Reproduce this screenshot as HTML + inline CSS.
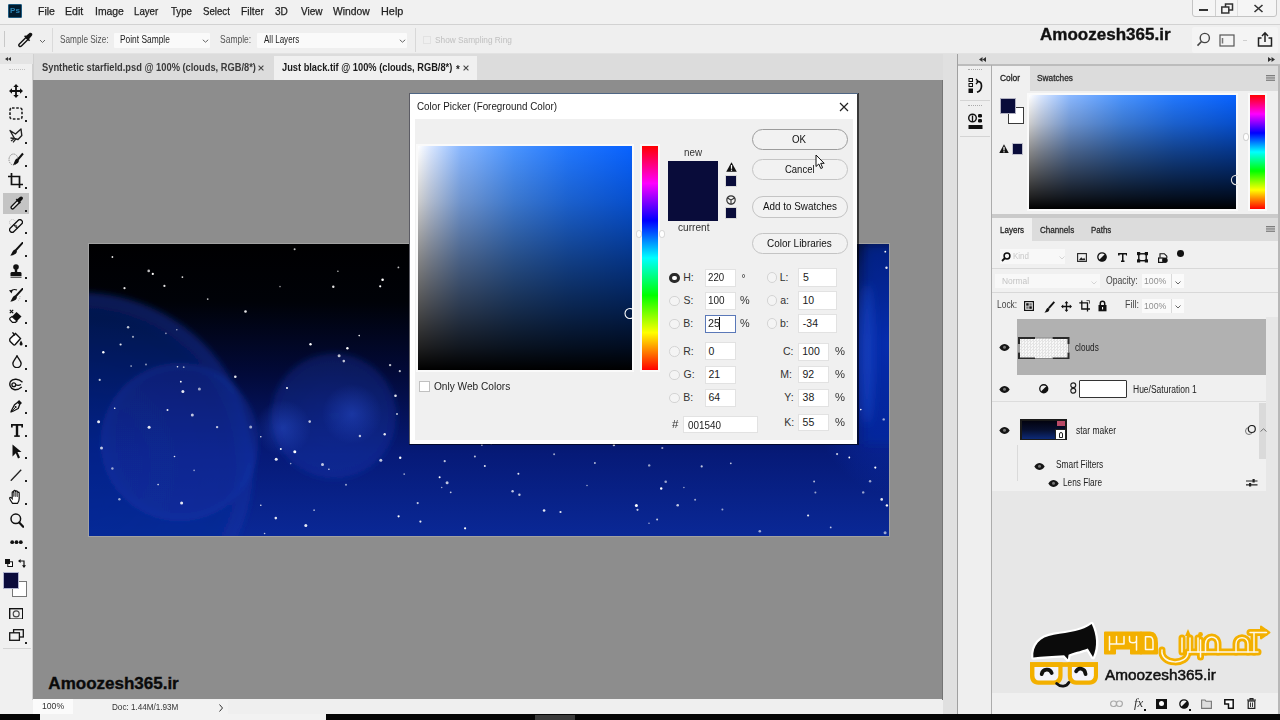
<!DOCTYPE html>
<html><head><meta charset="utf-8">
<style>
*{margin:0;padding:0;box-sizing:border-box}
html,body{width:1280px;height:720px;overflow:hidden;background:#f0f0f0;font-family:"Liberation Sans",sans-serif;color:#222}
.a{position:absolute}
.t{position:absolute;white-space:nowrap;line-height:1}
</style></head><body>
<div class="a" style="left:0;top:0;width:1280px;height:24px;background:#f1f1f1"></div>
<div class="a" style="left:0;top:24px;width:1280px;height:1px;background:#d2d2d2"></div>
<div class="a" style="left:8px;top:4px;width:14px;height:14px;background:#001a2e;border:1px solid #1d5a80;border-radius:1px"></div>
<div class="t" style="left:9.98px;top:7.20px;font-size:8px;color:#2b86b8;font-weight:bold;transform:scaleX(1.009);transform-origin:0 0;">Ps</div>
<div class="t" style="left:37.91px;top:5.95px;font-size:11px;color:#1e1e1e;transform:scaleX(0.958);transform-origin:0 0;-webkit-text-stroke:0.25px #1e1e1e">File</div>
<div class="t" style="left:65.41px;top:5.95px;font-size:11px;color:#1e1e1e;transform:scaleX(0.959);transform-origin:0 0;-webkit-text-stroke:0.25px #1e1e1e">Edit</div>
<div class="t" style="left:94.66px;top:5.95px;font-size:11px;color:#1e1e1e;transform:scaleX(0.945);transform-origin:0 0;-webkit-text-stroke:0.25px #1e1e1e">Image</div>
<div class="t" style="left:133.98px;top:5.95px;font-size:11px;color:#1e1e1e;transform:scaleX(0.879);transform-origin:0 0;-webkit-text-stroke:0.25px #1e1e1e">Layer</div>
<div class="t" style="left:170.51px;top:5.95px;font-size:11px;color:#1e1e1e;transform:scaleX(0.879);transform-origin:0 0;-webkit-text-stroke:0.25px #1e1e1e">Type</div>
<div class="t" style="left:203.27px;top:5.95px;font-size:11px;color:#1e1e1e;transform:scaleX(0.877);transform-origin:0 0;-webkit-text-stroke:0.25px #1e1e1e">Select</div>
<div class="t" style="left:241.18px;top:5.95px;font-size:11px;color:#1e1e1e;transform:scaleX(0.933);transform-origin:0 0;-webkit-text-stroke:0.25px #1e1e1e">Filter</div>
<div class="t" style="left:275.30px;top:5.95px;font-size:11px;color:#1e1e1e;transform:scaleX(0.917);transform-origin:0 0;-webkit-text-stroke:0.25px #1e1e1e">3D</div>
<div class="t" style="left:301.15px;top:5.95px;font-size:11px;color:#1e1e1e;transform:scaleX(0.911);transform-origin:0 0;-webkit-text-stroke:0.25px #1e1e1e">View</div>
<div class="t" style="left:333.45px;top:5.95px;font-size:11px;color:#1e1e1e;transform:scaleX(0.938);transform-origin:0 0;-webkit-text-stroke:0.25px #1e1e1e">Window</div>
<div class="t" style="left:381.03px;top:5.95px;font-size:11px;color:#1e1e1e;transform:scaleX(0.987);transform-origin:0 0;-webkit-text-stroke:0.25px #1e1e1e">Help</div>
<div class="a" style="left:1192px;top:-3px;width:85px;height:20px;border:1px solid #c4c4c4;border-radius:0 0 3px 3px;background:#f5f5f5"></div>
<div class="a" style="left:1215px;top:0;width:1px;height:16px;background:#cfcfcf"></div>
<div class="a" style="left:1237px;top:0;width:1px;height:16px;background:#e0e0e0"></div>
<div class="a" style="left:1199px;top:9px;width:9px;height:2px;background:#333"></div>
<svg class="a" style="left:1220px;top:3px" width="14" height="11" viewBox="0 0 14 11"><rect x="5.5" y="1" width="7" height="6" fill="none" stroke="#333" stroke-width="1.5"/><rect x="1.8" y="4" width="7" height="6" fill="#f5f5f5" stroke="#333" stroke-width="1.5"/></svg>
<svg class="a" style="left:1253px;top:4px" width="11" height="9" viewBox="0 0 11 9"><path d="M1.5 1L9.5 8M9.5 1L1.5 8" stroke="#333" stroke-width="1.6"/></svg>
<div class="a" style="left:0;top:25px;width:1280px;height:29px;background:#efefef"></div>
<div class="a" style="left:0;top:53px;width:1280px;height:1px;background:#e2e2e2"></div>
<div class="a" style="left:4px;top:31px;width:1px;height:16px;background:#c8c8c8"></div>
<svg class="a" style="left:17px;top:32px" width="17" height="16" viewBox="0 0 17 16"><path d="M2.3 14.2C1.6 13.5 1.8 12.6 2.4 12L9 5.4L11 7.4L4.4 14C3.8 14.6 3 14.8 2.3 14.2Z" fill="none" stroke="#111" stroke-width="1.4"/><path d="M8.2 4.6L12.2 1.2C13 0.5 14.1 0.6 14.8 1.3C15.5 2 15.5 3.1 14.8 3.8L11.6 7.8Z" fill="#111"/><path d="M7.6 3.8L12.6 8.8" stroke="#111" stroke-width="1.6"/></svg>
<svg class="a" style="left:39px;top:39px" width="7" height="5" viewBox="0 0 7 5"><path d="M1 1L3.5 3.5L6 1" fill="none" stroke="#666" stroke-width="1"/></svg>
<div class="a" style="left:52px;top:28px;width:1px;height:24px;background:#dadada"></div>
<div class="t" style="left:59.63px;top:34.60px;font-size:10px;color:#555;transform:scaleX(0.825);transform-origin:0 0;">Sample Size:</div>
<div class="a" style="left:113.5px;top:32.5px;width:96.5px;height:15.5px;background:#fafafa;border-radius:1px"></div>
<div class="t" style="left:119.93px;top:34.60px;font-size:10px;color:#222;transform:scaleX(0.838);transform-origin:0 0;">Point Sample</div>
<svg class="a" style="left:202px;top:39px" width="7" height="4" viewBox="0 0 7 4"><path d="M0.8 0.8L3.5 3.2L6.2 0.8" fill="none" stroke="#666" stroke-width="1"/></svg>
<div class="t" style="left:219.62px;top:34.60px;font-size:10px;color:#555;transform:scaleX(0.850);transform-origin:0 0;">Sample:</div>
<div class="a" style="left:256.5px;top:32.5px;width:150.5px;height:15.5px;background:#fafafa;border-radius:1px"></div>
<div class="t" style="left:263.60px;top:34.60px;font-size:10px;color:#222;transform:scaleX(0.804);transform-origin:0 0;">All Layers</div>
<svg class="a" style="left:399px;top:39px" width="7" height="4" viewBox="0 0 7 4"><path d="M0.8 0.8L3.5 3.2L6.2 0.8" fill="none" stroke="#666" stroke-width="1"/></svg>
<div class="a" style="left:415px;top:28px;width:1px;height:24px;background:#d8d8d8"></div>
<div class="a" style="left:423px;top:36px;width:8px;height:8px;border:1px solid #e2e2e2"></div>
<div class="t" style="left:435.13px;top:35.03px;font-size:9.5px;color:#c0c0c0;transform:scaleX(0.872);transform-origin:0 0;">Show Sampling Ring</div>
<div class="t" style="left:1039.57px;top:25.93px;font-size:16.2px;color:#111;font-weight:bold;transform:scaleX(1.052);transform-origin:0 0;-webkit-text-stroke:0.35px #111">Amoozesh365.ir</div>
<div class="a" style="left:1192px;top:27px;width:86px;height:26px;background:#f4f4f4;border-radius:2px"></div>
<svg class="a" style="left:1196px;top:32px" width="15" height="15" viewBox="0 0 15 15"><circle cx="8.8" cy="6" r="4.6" fill="none" stroke="#444" stroke-width="1.4"/><path d="M5.5 9.5L1.5 13.6" stroke="#444" stroke-width="1.6"/></svg>
<svg class="a" style="left:1219px;top:34px" width="16" height="13" viewBox="0 0 16 13"><rect x="1" y="1" width="14" height="11" fill="none" stroke="#555" stroke-width="1.2"/><path d="M3.5 4V9.5" stroke="#777" stroke-width="1.5"/></svg>
<div class="a" style="left:1243px;top:40px;width:4px;height:1px;background:#cfcfcf"></div>
<svg class="a" style="left:1257px;top:31px" width="16" height="16" viewBox="0 0 16 16"><path d="M4.5 7H1.5V15H14.5V7H11.5" fill="none" stroke="#222" stroke-width="1.5"/><path d="M8 11V2M5 5L8 1.8L11 5" fill="none" stroke="#222" stroke-width="1.5"/></svg>
<div class="a" style="left:33px;top:54px;width:910px;height:26px;background:#dcdcdc"></div>
<div class="t" style="left:42.47px;top:63.40px;font-size:10px;color:#3a3a3a;font-weight:bold;transform:scaleX(0.931);transform-origin:0 0;">Synthetic starfield.psd @ 100% (clouds, RGB/8*)</div>
<svg class="a" style="left:257.5px;top:64.5px" width="6" height="6" viewBox="0 0 6 6"><path d="M0.6 0.6L5.4 5.4M5.4 0.6L0.6 5.4" stroke="#444" stroke-width="1.1"/></svg>
<div class="a" style="left:273.5px;top:56px;width:203.5px;height:24px;background:#f0f0f0"></div>
<div class="t" style="left:281.56px;top:63.40px;font-size:10px;color:#1a1a1a;font-weight:bold;transform:scaleX(0.927);transform-origin:0 0;">Just black.tif @ 100% (clouds, RGB/8*)</div>
<div class="t" style="left:455.75px;top:65.00px;font-size:10px;color:#1a1a1a;font-weight:bold;transform:scaleX(0.974);transform-origin:0 0;">*</div>
<svg class="a" style="left:462.5px;top:64.5px" width="6" height="6" viewBox="0 0 6 6"><path d="M0.6 0.6L5.4 5.4M5.4 0.6L0.6 5.4" stroke="#444" stroke-width="1.1"/></svg>
<div class="a" style="left:0;top:54px;width:33px;height:660px;background:#f0f0f0"></div>
<div class="a" style="left:32px;top:54px;width:1.5px;height:646px;background:#d0d0d0"></div>
<div class="a" style="left:0;top:54px;width:33px;height:10px;background:#e4e4e4"></div>
<svg class="a" style="left:5px;top:57px" width="6" height="4" viewBox="0 0 6 4"><path d="M3 0L0 2L3 4ZM6 0L3 2L6 4Z" fill="#333"/></svg>
<div class="a" style="left:9px;top:69px;width:16px;height:1px;border-top:1px dotted #c0c0c0"></div>
<svg class="a" style="left:9px;top:84px" width="14" height="14" viewBox="0 0 14 14"><path d="M7 2V12M2 7H12" stroke="#111" stroke-width="1.8"/><path d="M7 0L4.3 3H9.7ZM7 14L4.3 11H9.7ZM0 7L3 4.3V9.7ZM14 7L11 4.3V9.7Z" fill="#111"/></svg>
<svg class="a" style="left:9px;top:107px" width="14" height="13" viewBox="0 0 14 13"><rect x="1" y="1" width="12" height="11" rx="2" fill="none" stroke="#222" stroke-width="1.6" stroke-dasharray="2.6 1.6"/></svg>
<svg class="a" style="left:9px;top:128px" width="14" height="15" viewBox="0 0 14 15"><path d="M1 2.5L6.5 6L12 1L12.8 7.5L9 11.5L5.5 10.5Z" fill="none" stroke="#222" stroke-width="1.4" stroke-linejoin="round"/><path d="M5.5 10.5L2 13M7 10.8L4 14.3M5.5 10.5L1.5 10" stroke="#222" stroke-width="1.3"/></svg>
<svg class="a" style="left:8px;top:152px" width="16" height="14" viewBox="0 0 16 14"><ellipse cx="5.5" cy="7.5" rx="4.5" ry="5.5" fill="none" stroke="#888" stroke-width="1" stroke-dasharray="1.4 0.9"/><path d="M9.5 8L15 1.5" stroke="#111" stroke-width="2"/><path d="M8.8 6.5C6.5 7.5 6.5 11 5 13C8 12.5 11 11 10.8 8.5Z" fill="#111"/></svg>
<svg class="a" style="left:8px;top:173px" width="15" height="15" viewBox="0 0 15 15"><path d="M3.5 0V11.5H15M0 3.5H11.5V15" fill="none" stroke="#111" stroke-width="1.7"/></svg>
<div class="a" style="left:3px;top:192.5px;width:26.4px;height:21.3px;background:#c4c4c4"></div>
<svg class="a" style="left:9.5px;top:196px" width="13" height="14" viewBox="0 0 13 14"><path d="M1.6 12.6C0.9 11.9 1 10.9 1.7 10.2L7.5 4.4L9.6 6.5L3.8 12.3C3.1 13 2.2 13.2 1.6 12.6Z" fill="#eee" stroke="#111" stroke-width="1.3"/><path d="M7 3.5L9.8 0.9C10.6 0.2 11.7 0.2 12.4 0.9C13.1 1.6 13.1 2.7 12.4 3.5L9.9 6.3Z" fill="#111"/><path d="M6.3 3.2L10.3 7.2" stroke="#111" stroke-width="1.7"/></svg>
<svg class="a" style="left:9px;top:219px" width="14" height="14" viewBox="0 0 14 14"><circle cx="3.5" cy="3.5" r="3" fill="none" stroke="#aaa" stroke-width="0.8" stroke-dasharray="1 1"/><path d="M1.2 9.3L9.3 1.2C10.2 0.3 11.5 0.3 12.4 1.2L12.8 1.6C13.7 2.5 13.7 3.8 12.8 4.7L4.7 12.8C3.8 13.7 2.5 13.7 1.6 12.8L1.2 12.4C0.3 11.5 0.3 10.2 1.2 9.3Z" fill="#f0f0f0" stroke="#111" stroke-width="1.3"/><path d="M4.5 5.5L8.5 9.5" stroke="#111" stroke-width="1"/><rect x="5.6" y="6" width="2.5" height="2.5" transform="rotate(45 6.85 7.25)" fill="#555"/></svg>
<svg class="a" style="left:10px;top:242px" width="13" height="14" viewBox="0 0 13 14"><path d="M12.5 0.8L6 8" stroke="#111" stroke-width="1.9" stroke-linecap="round"/><path d="M5.2 7.4C2.6 7.8 2.3 11 0.2 13.6C3.5 13.5 7 11.8 6.9 9Z" fill="#111"/></svg>
<svg class="a" style="left:10px;top:264px" width="12" height="14" viewBox="0 0 12 14"><circle cx="6" cy="3" r="2.8" fill="#111"/><rect x="4.8" y="5" width="2.4" height="3" fill="#111"/><path d="M0.5 12V9.5C0.5 8.5 1.3 8 2 8H10C10.8 8 11.5 8.5 11.5 9.5V12Z" fill="#111"/><rect x="0.5" y="12.6" width="11" height="1.3" fill="#555"/></svg>
<svg class="a" style="left:9px;top:288px" width="14" height="14" viewBox="0 0 14 14"><path d="M13.5 0.8L7 8" stroke="#111" stroke-width="1.9" stroke-linecap="round"/><path d="M6.2 7.4C3.6 7.8 3.3 11 1.2 13.6C4.5 13.5 8 11.8 7.9 9Z" fill="#111"/><path d="M1.5 3.5Q4 0.5 8 2" fill="none" stroke="#111" stroke-width="1.2"/><path d="M0 2.2L2.5 5.5L3.8 2Z" fill="#111"/><path d="M11 8Q11 12 8.5 13" fill="none" stroke="#999" stroke-width="0.8" stroke-dasharray="1 1"/></svg>
<svg class="a" style="left:9px;top:309px" width="13" height="14" viewBox="0 0 13 14"><path d="M0.8 0.8L4.2 4.2M4.2 0.8L0.8 4.2" stroke="#111" stroke-width="1.2"/><path d="M7.5 3L12.5 7.5L8 12L3 7.5Z" fill="#111"/><path d="M3 7.5L8 12L6.5 13.3H3.5L1.2 11C0.5 10.3 0.5 9.5 1.2 8.9Z" fill="#fff" stroke="#111" stroke-width="1.2"/></svg>
<svg class="a" style="left:9px;top:332px" width="14" height="14" viewBox="0 0 14 14"><path d="M1.2 6.5L6.5 1.5L11.5 6.5L6.3 12.5C5.7 13.1 4.9 13.1 4.3 12.5L1.2 9.4C0.6 8.8 0.6 7.1 1.2 6.5Z" fill="#fff" stroke="#111" stroke-width="1.4"/><path d="M3.5 0.3L6 3.5" stroke="#111" stroke-width="1.3"/><path d="M12 8.5C12.8 10 13.6 11 13.6 12A1.5 1.5 0 0 1 10.6 12C10.6 11 11.3 10 12 8.5Z" fill="#111"/></svg>
<svg class="a" style="left:11.5px;top:355px" width="10" height="13" viewBox="0 0 10 13"><path d="M5 0.8C3.5 4 0.9 6 0.9 8.6A4.1 4.1 0 0 0 9.1 8.6C9.1 6 6.5 4 5 0.8Z" fill="none" stroke="#111" stroke-width="1.4"/></svg>
<svg class="a" style="left:9px;top:378px" width="14" height="13" viewBox="0 0 14 13"><path d="M13.5 4.2C10 0.8 4 0 1.5 3.5C0 6 1 10.5 5 11.5C8 12.2 11 10.5 12.8 9" fill="none" stroke="#111" stroke-width="1.4"/><circle cx="4.8" cy="6.8" r="1.9" fill="none" stroke="#111" stroke-width="1.3"/><path d="M6.6 6.8Q9.5 8 12 6.5" fill="none" stroke="#111" stroke-width="1.1"/></svg>
<svg class="a" style="left:10px;top:400px" width="12" height="13" viewBox="0 0 12 13"><path d="M8.3 0.8L11.2 3.7" stroke="#111" stroke-width="2.2"/><path d="M7.8 2.2L9.8 4.2L8.2 8.5L2.5 11.5L1 12L1.5 10.5L4.5 4.8Z" fill="none" stroke="#111" stroke-width="1.3" stroke-linejoin="round"/><circle cx="5.6" cy="7" r="1" fill="#111"/><path d="M1.3 11.7L5 8" stroke="#111" stroke-width="0.9"/></svg>
<svg class="a" style="left:10.5px;top:423.5px" width="12" height="13" viewBox="0 0 12 13"><path d="M0.8 3.5V0.9H11.2V3.5" fill="none" stroke="#111" stroke-width="1.8"/><path d="M6 0.9V12" stroke="#111" stroke-width="2.4"/><path d="M3.2 12.1H8.8" stroke="#111" stroke-width="1.6"/></svg>
<svg class="a" style="left:12px;top:444px" width="10" height="15" viewBox="0 0 10 15"><path d="M0.5 0.5L9.5 8H5.5L8 13.5L6 14.5L3.8 9.3L0.5 12.5Z" fill="#111"/></svg>
<svg class="a" style="left:10px;top:468.5px" width="12" height="12.5" viewBox="0 0 12 12.5"><path d="M0.8 11.8L11.2 0.8" stroke="#222" stroke-width="1.3"/></svg>
<svg class="a" style="left:9px;top:489px" width="13" height="15" viewBox="0 0 13 15"><path d="M3.2 13.8C2 12.3 0.5 10 0.7 9C0.9 8.1 2.2 8.3 3.2 9.6V3.6C3.2 2.4 4.8 2.4 4.8 3.6V7.5V2.2C4.8 1 6.6 1 6.6 2.2V7.5V2.7C6.6 1.5 8.4 1.5 8.4 2.7V7.8V4C8.4 2.9 10.2 2.9 10.2 4V9.5C10.2 12 9.3 13.3 8.5 14.3H3.6Z" fill="#fff" stroke="#111" stroke-width="1.2"/><path d="M4.8 4V7.5M6.6 3V7.5M8.4 3.5V7.8" stroke="#777" stroke-width="1"/></svg>
<svg class="a" style="left:9.5px;top:512.5px" width="14" height="15" viewBox="0 0 14 15"><circle cx="5.8" cy="5.8" r="4.8" fill="none" stroke="#111" stroke-width="1.5"/><path d="M9.2 9.5L13.2 13.8" stroke="#111" stroke-width="2.2" stroke-linecap="round"/></svg>
<svg class="a" style="left:10px;top:540px" width="13" height="5" viewBox="0 0 13 5"><circle cx="2.2" cy="2.2" r="1.9" fill="#111"/><circle cx="6.5" cy="2.2" r="1.9" fill="#111"/><circle cx="10.8" cy="2.2" r="1.9" fill="#111"/></svg>
<svg class="a" style="left:4.5px;top:559px" width="8" height="8" viewBox="0 0 8 8"><rect x="2.8" y="2.8" width="4.7" height="4.7" fill="#fff" stroke="#111" stroke-width="1"/><rect x="0" y="0" width="5" height="5" fill="#111"/></svg>
<svg class="a" style="left:18px;top:559px" width="8" height="9" viewBox="0 0 8 9"><path d="M2 2H6V7.5" fill="none" stroke="#111" stroke-width="1.2"/><path d="M0 2L2.6 0V4ZM6 9L4 6.3H8Z" fill="#111"/></svg>
<div class="a" style="left:11.7px;top:580.5px;width:15.3px;height:16.3px;background:#fff;border:1px solid #777"></div>
<div class="a" style="left:3.25px;top:572.4px;width:15.75px;height:16.3px;background:#0a0b3c;border:1px solid #b0b4d0"></div>
<svg class="a" style="left:8.7px;top:607.6px" width="14.4" height="11.8" viewBox="0 0 14.4 11.8"><rect x="0.7" y="0.7" width="13" height="10.4" fill="none" stroke="#111" stroke-width="1.4"/><circle cx="7.2" cy="5.9" r="3" fill="none" stroke="#444" stroke-width="1.1"/></svg>
<svg class="a" style="left:8.7px;top:629.3px" width="15" height="12" viewBox="0 0 15 12"><rect x="4.6" y="0.7" width="9.7" height="7.3" fill="none" stroke="#111" stroke-width="1.3"/><rect x="0.7" y="3.8" width="9.7" height="7.5" fill="#f0f0f0" stroke="#111" stroke-width="1.3"/></svg>
<div class="a" style="left:3px;top:648px;width:28px;height:1px;background:#d4d4d4"></div>
<div class="a" style="left:25px;top:96px;width:2px;height:2px;background:#222"></div>
<div class="a" style="left:25px;top:119.6px;width:2px;height:2px;background:#222"></div>
<div class="a" style="left:25px;top:141.5px;width:2px;height:2px;background:#222"></div>
<div class="a" style="left:25px;top:164.6px;width:2px;height:2px;background:#222"></div>
<div class="a" style="left:25px;top:187px;width:2px;height:2px;background:#222"></div>
<div class="a" style="left:25px;top:209.6px;width:2px;height:2px;background:#222"></div>
<div class="a" style="left:25px;top:231.5px;width:2px;height:2px;background:#222"></div>
<div class="a" style="left:25px;top:254.6px;width:2px;height:2px;background:#222"></div>
<div class="a" style="left:25px;top:277px;width:2px;height:2px;background:#222"></div>
<div class="a" style="left:25px;top:300px;width:2px;height:2px;background:#222"></div>
<div class="a" style="left:25px;top:322px;width:2px;height:2px;background:#222"></div>
<div class="a" style="left:25px;top:345px;width:2px;height:2px;background:#222"></div>
<div class="a" style="left:25px;top:367.75px;width:2px;height:2px;background:#222"></div>
<div class="a" style="left:25px;top:390px;width:2px;height:2px;background:#222"></div>
<div class="a" style="left:25px;top:412px;width:2px;height:2px;background:#222"></div>
<div class="a" style="left:25px;top:435px;width:2px;height:2px;background:#222"></div>
<div class="a" style="left:25px;top:457px;width:2px;height:2px;background:#222"></div>
<div class="a" style="left:25px;top:480px;width:2px;height:2px;background:#222"></div>
<div class="a" style="left:25px;top:503px;width:2px;height:2px;background:#222"></div>
<div class="a" style="left:25px;top:547px;width:2px;height:2px;background:#222"></div>
<div class="a" style="left:25px;top:641.8px;width:2px;height:2px;background:#222"></div>
<div class="a" style="left:33px;top:80px;width:910px;height:620px;background:#8d8d8d"></div>
<div class="a" style="left:88px;top:243px;width:802px;height:294px;background:#a2a2a2"></div>
<svg class="a" style="left:89px;top:244px" width="800" height="292" viewBox="0 0 800 292">
<defs>
<linearGradient id="bg" x1="0" y1="0" x2="0" y2="1">
<stop offset="0" stop-color="#000001"/><stop offset="0.2" stop-color="#000208"/><stop offset="0.45" stop-color="#020a3a"/><stop offset="0.72" stop-color="#061a78"/><stop offset="1" stop-color="#0a2896"/></linearGradient>
<radialGradient id="rg" cx="0.5" cy="0.5" r="0.5"><stop offset="0" stop-color="#0c38d0" stop-opacity="0.85"/><stop offset="0.6" stop-color="#0a30b8" stop-opacity="0.5"/><stop offset="1" stop-color="#0a30b8" stop-opacity="0"/></radialGradient>
<radialGradient id="big" cx="0.5" cy="0.5" r="0.5"><stop offset="0" stop-color="#0a2a98" stop-opacity="0.55"/><stop offset="0.85" stop-color="#0a2a98" stop-opacity="0.45"/><stop offset="0.96" stop-color="#1434a8" stop-opacity="0.5"/><stop offset="1" stop-color="#1434a8" stop-opacity="0"/></radialGradient>
<radialGradient id="c1" cx="0.5" cy="0.5" r="0.5"><stop offset="0" stop-color="#1838b0" stop-opacity="0.22"/><stop offset="0.88" stop-color="#1838b0" stop-opacity="0.22"/><stop offset="0.96" stop-color="#1c40c0" stop-opacity="0.3"/><stop offset="1" stop-color="#1c40c0" stop-opacity="0"/></radialGradient>
<radialGradient id="c2" cx="0.5" cy="0.5" r="0.5"><stop offset="0" stop-color="#1a3cb8" stop-opacity="0.4"/><stop offset="0.9" stop-color="#1a3cb8" stop-opacity="0.3"/><stop offset="1" stop-color="#1a3cb8" stop-opacity="0"/></radialGradient>
<radialGradient id="sp" cx="0.5" cy="0.5" r="0.5"><stop offset="0" stop-color="#2a50d0" stop-opacity="0.45"/><stop offset="1" stop-color="#2a50d0" stop-opacity="0"/></radialGradient>
<filter id="blur" x="-1" y="-1" width="3" height="3"><feGaussianBlur stdDeviation="5"/></filter>
<filter id="soft" x="-0.2" y="-0.2" width="1.4" height="1.4"><feGaussianBlur stdDeviation="2.5"/></filter>
</defs>
<rect width="800" height="292" fill="url(#bg)"/>
<ellipse cx="800" cy="100" rx="90" ry="150" fill="url(#rg)"/>
<rect x="775" y="0" width="40" height="200" fill="#0a2aa8" fill-opacity="0.55" filter="url(#blur)"/>
<ellipse cx="778" cy="110" rx="7" ry="70" fill="#2a5ae0" fill-opacity="0.4" filter="url(#blur)"/>
<g filter="url(#soft)">
<circle cx="-8" cy="221" r="176" fill="url(#big)"/>
<circle cx="91" cy="198" r="80" fill="url(#c1)"/>
<circle cx="245" cy="172" r="66" fill="url(#c2)"/>
</g>
<circle cx="263" cy="170" r="30" fill="url(#sp)"/>
<circle cx="194" cy="184" r="28" fill="url(#sp)"/>
<circle cx="710" cy="40" r="3" fill="#3060ff" fill-opacity="0.8"/>
<circle cx="362.1" cy="163.2" r="1.5" fill="#fff" fill-opacity="1.0"/><circle cx="361.7" cy="248.3" r="0.9" fill="#fff" fill-opacity="0.75"/><circle cx="641.9" cy="139.0" r="1.2" fill="#fff" fill-opacity="0.75"/><circle cx="76.9" cy="89.4" r="0.8" fill="#fff" fill-opacity="0.6"/><circle cx="476.0" cy="116.1" r="1.1" fill="#fff" fill-opacity="0.75"/><circle cx="498.0" cy="241.5" r="0.8" fill="#fff" fill-opacity="0.6"/><circle cx="30.4" cy="255.3" r="1.2" fill="#fff" fill-opacity="0.6"/><circle cx="621.4" cy="96.0" r="1.2" fill="#fff" fill-opacity="0.75"/><circle cx="415.2" cy="186.4" r="1.1" fill="#fff" fill-opacity="0.6"/><circle cx="529.3" cy="133.7" r="1.0" fill="#fff" fill-opacity="1.0"/><circle cx="796.1" cy="288.8" r="1.5" fill="#fff" fill-opacity="0.6"/><circle cx="565.4" cy="92.8" r="0.9" fill="#fff" fill-opacity="0.9"/><circle cx="25.7" cy="164.2" r="0.8" fill="#fff" fill-opacity="1.0"/><circle cx="87.8" cy="85.8" r="0.8" fill="#fff" fill-opacity="0.6"/><circle cx="676.5" cy="2.2" r="0.9" fill="#fff" fill-opacity="0.6"/><circle cx="376.1" cy="284.3" r="1.1" fill="#fff" fill-opacity="1.0"/><circle cx="60.1" cy="183.3" r="1.5" fill="#fff" fill-opacity="0.9"/><circle cx="270.2" cy="91.6" r="0.8" fill="#fff" fill-opacity="1.0"/><circle cx="605.4" cy="36.0" r="0.9" fill="#fff" fill-opacity="0.6"/><circle cx="10.7" cy="135.9" r="1.1" fill="#fff" fill-opacity="0.75"/><circle cx="544.9" cy="56.3" r="1.2" fill="#fff" fill-opacity="0.75"/><circle cx="786.3" cy="223.6" r="1.1" fill="#fff" fill-opacity="1.0"/><circle cx="94.7" cy="123.2" r="0.9" fill="#fff" fill-opacity="0.6"/><circle cx="216.8" cy="281.6" r="1.5" fill="#fff" fill-opacity="0.9"/><circle cx="796.3" cy="7.7" r="0.9" fill="#fff" fill-opacity="1.0"/><circle cx="794.7" cy="175.4" r="1.2" fill="#fff" fill-opacity="0.6"/><circle cx="35.5" cy="44.2" r="1.1" fill="#fff" fill-opacity="0.9"/><circle cx="9.6" cy="177.8" r="1.5" fill="#fff" fill-opacity="0.9"/><circle cx="309.4" cy="23.4" r="0.9" fill="#fff" fill-opacity="0.75"/><circle cx="14.3" cy="108.2" r="1.2" fill="#fff" fill-opacity="1.0"/><circle cx="103.3" cy="171.1" r="1.5" fill="#fff" fill-opacity="0.75"/><circle cx="691.8" cy="54.7" r="0.9" fill="#fff" fill-opacity="0.9"/><circle cx="725.1" cy="237.5" r="0.9" fill="#fff" fill-opacity="0.75"/><circle cx="128.1" cy="183.1" r="1.2" fill="#fff" fill-opacity="0.75"/><circle cx="548.8" cy="113.8" r="1.1" fill="#fff" fill-opacity="0.6"/><circle cx="337.5" cy="31.9" r="0.8" fill="#fff" fill-opacity="0.9"/><circle cx="191.8" cy="204.9" r="1.0" fill="#fff" fill-opacity="1.0"/><circle cx="657.7" cy="173.8" r="1.0" fill="#fff" fill-opacity="0.75"/><circle cx="741.7" cy="283.4" r="0.9" fill="#fff" fill-opacity="0.75"/><circle cx="383.5" cy="190.2" r="1.2" fill="#fff" fill-opacity="0.6"/><circle cx="225.1" cy="266.2" r="0.9" fill="#fff" fill-opacity="0.6"/><circle cx="57.0" cy="120.5" r="0.9" fill="#fff" fill-opacity="0.6"/><circle cx="39.1" cy="83.2" r="1.2" fill="#fff" fill-opacity="0.75"/><circle cx="75.4" cy="41.9" r="1.1" fill="#fff" fill-opacity="0.9"/><circle cx="524.9" cy="201.1" r="1.2" fill="#fff" fill-opacity="0.75"/><circle cx="471.5" cy="268.0" r="1.1" fill="#fff" fill-opacity="0.9"/><circle cx="560.0" cy="279.3" r="0.8" fill="#fff" fill-opacity="0.6"/><circle cx="385.9" cy="212.4" r="1.0" fill="#fff" fill-opacity="0.75"/><circle cx="797.5" cy="23.7" r="1.2" fill="#fff" fill-opacity="0.9"/><circle cx="588.7" cy="261.3" r="1.3" fill="#fff" fill-opacity="0.75"/><circle cx="633.4" cy="265.5" r="1.0" fill="#fff" fill-opacity="0.6"/><circle cx="547.4" cy="261.4" r="1.5" fill="#fff" fill-opacity="1.0"/><circle cx="753.6" cy="10.7" r="1.1" fill="#fff" fill-opacity="0.6"/><circle cx="499.5" cy="112.1" r="1.2" fill="#fff" fill-opacity="0.6"/><circle cx="486.7" cy="25.1" r="1.3" fill="#fff" fill-opacity="0.6"/><circle cx="792.7" cy="255.4" r="1.3" fill="#fff" fill-opacity="0.9"/><circle cx="311.2" cy="213.7" r="1.2" fill="#fff" fill-opacity="1.0"/><circle cx="352.7" cy="243.5" r="0.8" fill="#fff" fill-opacity="0.6"/><circle cx="248.9" cy="27.3" r="0.8" fill="#fff" fill-opacity="0.75"/><circle cx="764.1" cy="34.5" r="1.5" fill="#fff" fill-opacity="1.0"/><circle cx="205.6" cy="5.3" r="1.0" fill="#fff" fill-opacity="0.75"/><circle cx="541.8" cy="60.3" r="0.9" fill="#fff" fill-opacity="0.9"/><circle cx="527.4" cy="129.3" r="0.9" fill="#fff" fill-opacity="0.9"/><circle cx="324.2" cy="74.2" r="1.3" fill="#fff" fill-opacity="1.0"/><circle cx="641.8" cy="219.3" r="0.9" fill="#fff" fill-opacity="0.75"/><circle cx="308.0" cy="169.9" r="1.0" fill="#fff" fill-opacity="0.75"/><circle cx="110.4" cy="145.0" r="1.5" fill="#fff" fill-opacity="0.6"/><circle cx="568.1" cy="275.6" r="1.0" fill="#fff" fill-opacity="0.75"/><circle cx="91.8" cy="137.7" r="0.9" fill="#fff" fill-opacity="1.0"/><circle cx="306.5" cy="151.8" r="1.3" fill="#fff" fill-opacity="0.9"/><circle cx="572.2" cy="244.5" r="1.2" fill="#fff" fill-opacity="1.0"/><circle cx="257.0" cy="240.7" r="1.0" fill="#fff" fill-opacity="0.6"/><circle cx="541.9" cy="82.9" r="1.0" fill="#fff" fill-opacity="0.9"/><circle cx="518.8" cy="164.4" r="1.3" fill="#fff" fill-opacity="0.75"/><circle cx="324.5" cy="56.7" r="1.5" fill="#fff" fill-opacity="0.9"/><circle cx="191.0" cy="42.6" r="0.8" fill="#fff" fill-opacity="0.6"/><circle cx="357.4" cy="183.4" r="1.3" fill="#fff" fill-opacity="0.9"/><circle cx="764.9" cy="199.1" r="0.9" fill="#fff" fill-opacity="1.0"/><circle cx="205.8" cy="207.7" r="1.5" fill="#fff" fill-opacity="1.0"/><circle cx="427.7" cy="12.4" r="0.9" fill="#fff" fill-opacity="0.9"/><circle cx="621.8" cy="157.4" r="1.2" fill="#fff" fill-opacity="0.75"/><circle cx="315.2" cy="230.1" r="0.9" fill="#fff" fill-opacity="0.6"/><circle cx="328.7" cy="259.1" r="1.1" fill="#fff" fill-opacity="0.75"/><circle cx="360.6" cy="58.7" r="0.8" fill="#fff" fill-opacity="1.0"/><circle cx="439.8" cy="190.0" r="1.2" fill="#fff" fill-opacity="0.9"/><circle cx="371.1" cy="189.6" r="0.9" fill="#fff" fill-opacity="0.6"/><circle cx="576.7" cy="237.7" r="1.3" fill="#fff" fill-opacity="0.6"/><circle cx="171.8" cy="261.2" r="0.8" fill="#fff" fill-opacity="0.9"/><circle cx="429.4" cy="229.7" r="1.0" fill="#fff" fill-opacity="0.9"/><circle cx="726.4" cy="248.5" r="1.0" fill="#fff" fill-opacity="0.6"/><circle cx="31.6" cy="100.5" r="1.1" fill="#fff" fill-opacity="0.9"/><circle cx="390.0" cy="10.2" r="1.5" fill="#fff" fill-opacity="0.6"/><circle cx="343.4" cy="12.1" r="1.2" fill="#fff" fill-opacity="0.9"/><circle cx="548.5" cy="265.8" r="1.1" fill="#fff" fill-opacity="0.75"/><circle cx="797.9" cy="261.4" r="1.2" fill="#fff" fill-opacity="1.0"/><circle cx="754.8" cy="143.9" r="1.3" fill="#fff" fill-opacity="0.6"/><circle cx="605.2" cy="128.6" r="1.2" fill="#fff" fill-opacity="0.9"/><circle cx="663.6" cy="163.7" r="0.9" fill="#fff" fill-opacity="0.9"/><circle cx="250.1" cy="111.8" r="1.5" fill="#fff" fill-opacity="0.75"/><circle cx="244.3" cy="42.7" r="1.2" fill="#fff" fill-opacity="0.9"/><circle cx="458.1" cy="59.9" r="1.2" fill="#fff" fill-opacity="0.6"/><circle cx="402.5" cy="176.3" r="0.8" fill="#fff" fill-opacity="0.6"/><circle cx="412.8" cy="117.4" r="1.5" fill="#fff" fill-opacity="0.6"/><circle cx="392.9" cy="201.0" r="0.8" fill="#fff" fill-opacity="1.0"/><circle cx="331.4" cy="277.6" r="1.1" fill="#fff" fill-opacity="0.9"/><circle cx="198.0" cy="144.0" r="1.0" fill="#fff" fill-opacity="1.0"/><circle cx="719.1" cy="271.5" r="1.1" fill="#fff" fill-opacity="0.9"/><circle cx="88.5" cy="122.8" r="0.8" fill="#fff" fill-opacity="0.9"/><circle cx="105.1" cy="226.4" r="0.8" fill="#fff" fill-opacity="0.6"/><circle cx="156.5" cy="67.5" r="1.3" fill="#fff" fill-opacity="0.9"/><circle cx="258.4" cy="104.3" r="1.2" fill="#fff" fill-opacity="1.0"/><circle cx="85.5" cy="212.5" r="0.8" fill="#fff" fill-opacity="0.9"/><circle cx="573.3" cy="204.0" r="1.1" fill="#fff" fill-opacity="0.6"/><circle cx="301.1" cy="121.1" r="1.2" fill="#fff" fill-opacity="0.75"/><circle cx="430.4" cy="250.8" r="1.2" fill="#fff" fill-opacity="0.75"/><circle cx="423.6" cy="247.2" r="1.2" fill="#fff" fill-opacity="0.75"/><circle cx="187.2" cy="215.3" r="1.5" fill="#fff" fill-opacity="0.9"/><circle cx="720.5" cy="93.0" r="1.0" fill="#fff" fill-opacity="0.75"/><circle cx="175.6" cy="289.5" r="0.8" fill="#fff" fill-opacity="0.75"/><circle cx="709.6" cy="40.2" r="0.8" fill="#fff" fill-opacity="0.9"/><circle cx="310.8" cy="127.2" r="1.1" fill="#fff" fill-opacity="0.75"/><circle cx="161.7" cy="182.9" r="1.5" fill="#fff" fill-opacity="0.6"/><circle cx="78.5" cy="166.1" r="1.0" fill="#fff" fill-opacity="0.9"/><circle cx="93.9" cy="147.6" r="1.5" fill="#fff" fill-opacity="0.9"/><circle cx="402.2" cy="199.5" r="0.9" fill="#fff" fill-opacity="0.6"/><circle cx="385.7" cy="9.0" r="1.5" fill="#fff" fill-opacity="1.0"/><circle cx="118.7" cy="55.1" r="0.9" fill="#fff" fill-opacity="0.75"/><circle cx="670.8" cy="287.2" r="1.3" fill="#fff" fill-opacity="0.6"/><circle cx="463.5" cy="40.7" r="1.3" fill="#fff" fill-opacity="1.0"/><circle cx="63.8" cy="29.9" r="1.1" fill="#fff" fill-opacity="1.0"/><circle cx="341.4" cy="104.1" r="0.9" fill="#fff" fill-opacity="0.9"/><circle cx="12.5" cy="203.9" r="1.5" fill="#fff" fill-opacity="0.75"/><circle cx="146.3" cy="132.7" r="1.3" fill="#fff" fill-opacity="0.9"/><circle cx="324.6" cy="58.2" r="0.9" fill="#fff" fill-opacity="0.6"/><circle cx="410.0" cy="6.4" r="0.8" fill="#fff" fill-opacity="1.0"/><circle cx="455.5" cy="57.0" r="1.2" fill="#fff" fill-opacity="0.9"/><circle cx="642.6" cy="76.4" r="0.8" fill="#fff" fill-opacity="0.75"/><circle cx="650.5" cy="118.8" r="1.0" fill="#fff" fill-opacity="0.9"/><circle cx="612.7" cy="222.4" r="1.1" fill="#fff" fill-opacity="0.75"/><circle cx="577.2" cy="22.3" r="1.0" fill="#fff" fill-opacity="0.9"/><circle cx="375.2" cy="5.1" r="1.0" fill="#fff" fill-opacity="0.6"/><circle cx="186.8" cy="274.1" r="1.3" fill="#fff" fill-opacity="0.9"/><circle cx="270.9" cy="192.0" r="1.2" fill="#fff" fill-opacity="0.75"/><circle cx="426.3" cy="114.2" r="1.1" fill="#fff" fill-opacity="0.75"/><circle cx="560.2" cy="221.4" r="1.2" fill="#fff" fill-opacity="0.6"/><circle cx="93.4" cy="33.1" r="0.9" fill="#fff" fill-opacity="0.9"/><circle cx="355.1" cy="147.4" r="1.5" fill="#fff" fill-opacity="0.75"/><circle cx="517.8" cy="5.1" r="1.0" fill="#fff" fill-opacity="0.9"/><circle cx="221.5" cy="100.2" r="1.2" fill="#fff" fill-opacity="1.0"/><circle cx="771.8" cy="165.6" r="0.8" fill="#fff" fill-opacity="1.0"/><circle cx="646.4" cy="23.9" r="1.2" fill="#fff" fill-opacity="0.6"/><circle cx="309.6" cy="272.3" r="1.1" fill="#fff" fill-opacity="1.0"/><circle cx="774.2" cy="248.4" r="1.2" fill="#fff" fill-opacity="0.6"/><circle cx="343.9" cy="144.4" r="1.0" fill="#fff" fill-opacity="1.0"/><circle cx="477.9" cy="107.3" r="1.0" fill="#fff" fill-opacity="1.0"/><circle cx="523.5" cy="163.5" r="1.0" fill="#fff" fill-opacity="0.9"/><circle cx="23.4" cy="224.5" r="1.2" fill="#fff" fill-opacity="0.6"/><circle cx="505.9" cy="119.7" r="1.3" fill="#fff" fill-opacity="1.0"/><circle cx="44.0" cy="92.8" r="1.1" fill="#fff" fill-opacity="0.6"/><circle cx="465.1" cy="210.2" r="1.0" fill="#fff" fill-opacity="0.6"/><circle cx="636.9" cy="66.4" r="1.3" fill="#fff" fill-opacity="1.0"/><circle cx="201.7" cy="219.6" r="0.8" fill="#fff" fill-opacity="0.6"/><circle cx="748.1" cy="210.1" r="1.1" fill="#fff" fill-opacity="0.75"/><circle cx="781.1" cy="237.2" r="1.2" fill="#fff" fill-opacity="0.6"/><circle cx="42.1" cy="122.1" r="0.8" fill="#fff" fill-opacity="0.75"/><circle cx="687.5" cy="104.7" r="0.9" fill="#fff" fill-opacity="0.6"/><circle cx="291.2" cy="42.3" r="1.1" fill="#fff" fill-opacity="1.0"/><circle cx="480.4" cy="186.2" r="1.3" fill="#fff" fill-opacity="1.0"/><circle cx="291.8" cy="216.2" r="1.5" fill="#fff" fill-opacity="0.75"/><circle cx="760.3" cy="213.5" r="0.9" fill="#fff" fill-opacity="1.0"/><circle cx="92.6" cy="259.1" r="1.5" fill="#fff" fill-opacity="0.9"/><circle cx="220.7" cy="177.6" r="1.3" fill="#fff" fill-opacity="0.75"/><circle cx="505.9" cy="219.0" r="0.9" fill="#fff" fill-opacity="0.75"/><circle cx="401.7" cy="190.0" r="0.9" fill="#fff" fill-opacity="0.6"/><circle cx="502.2" cy="4.7" r="1.0" fill="#fff" fill-opacity="1.0"/><circle cx="23.4" cy="13.0" r="0.9" fill="#fff" fill-opacity="0.9"/><circle cx="59.7" cy="26.9" r="1.3" fill="#fff" fill-opacity="0.75"/><circle cx="440.3" cy="183.8" r="1.0" fill="#fff" fill-opacity="1.0"/><circle cx="382.9" cy="62.7" r="1.0" fill="#fff" fill-opacity="1.0"/><circle cx="594.9" cy="243.5" r="0.8" fill="#fff" fill-opacity="0.6"/><circle cx="358.1" cy="238.7" r="1.5" fill="#fff" fill-opacity="0.75"/><circle cx="355.7" cy="217.2" r="1.1" fill="#fff" fill-opacity="0.75"/><circle cx="295.7" cy="190.3" r="1.2" fill="#fff" fill-opacity="0.9"/><circle cx="233.5" cy="220.6" r="1.5" fill="#fff" fill-opacity="0.75"/><circle cx="342.4" cy="108.3" r="0.8" fill="#fff" fill-opacity="1.0"/><circle cx="698.6" cy="24.6" r="0.8" fill="#fff" fill-opacity="1.0"/><circle cx="451.1" cy="141.6" r="1.3" fill="#fff" fill-opacity="1.0"/><circle cx="239.9" cy="225.3" r="0.8" fill="#fff" fill-opacity="0.9"/><circle cx="171.8" cy="192.7" r="0.8" fill="#fff" fill-opacity="0.9"/><circle cx="395.8" cy="222.1" r="1.0" fill="#fff" fill-opacity="0.9"/><circle cx="703.8" cy="65.0" r="1.3" fill="#fff" fill-opacity="0.9"/><circle cx="293.6" cy="35.8" r="1.3" fill="#fff" fill-opacity="1.0"/><circle cx="455.1" cy="266.5" r="1.3" fill="#fff" fill-opacity="0.9"/><circle cx="350.6" cy="233.3" r="1.0" fill="#fff" fill-opacity="1.0"/><circle cx="254.8" cy="117.1" r="1.3" fill="#fff" fill-opacity="0.75"/><circle cx="69.1" cy="240.6" r="0.8" fill="#fff" fill-opacity="0.9"/><circle cx="540.9" cy="170.4" r="1.5" fill="#fff" fill-opacity="0.75"/><circle cx="590.1" cy="108.1" r="1.1" fill="#fff" fill-opacity="0.75"/><circle cx="667.8" cy="164.1" r="0.9" fill="#fff" fill-opacity="0.6"/><circle cx="606.1" cy="255.7" r="1.0" fill="#fff" fill-opacity="0.6"/>
</svg><div class="a" style="left:409px;top:92.5px;width:449.5px;height:352.5px;background:rgba(0,0,0,0.6)"></div>
<div class="a" style="left:409px;top:92.5px;width:449px;height:1.5px;background:#4f6684"></div>
<div class="a" style="left:409px;top:93px;width:1px;height:351px;background:#5c5c64"></div>
<div class="a" style="left:410px;top:94px;width:447px;height:350px;background:#fff"></div>
<div class="a" style="left:415px;top:119px;width:438px;height:321px;background:#f0f0f0"></div>
<div class="t" style="left:416.51px;top:101.25px;font-size:11px;color:#1a1a1a;transform:scaleX(0.895);transform-origin:0 0;">Color Picker (Foreground Color)</div>
<svg class="a" style="left:838.5px;top:101.5px" width="10" height="10" viewBox="0 0 10 10"><path d="M1 1L9 9M9 1L1 9" stroke="#222" stroke-width="1.2"/></svg>
<div class="a" style="left:416px;top:144px;width:218px;height:228px;background:#fafafa"></div>
<div class="a" style="left:418px;top:146px;width:214px;height:224px;background:linear-gradient(to right,#fff 0%,#d8e6ff 6%,#8ab8ff 20%,#4a94ff 45%,#2278ff 70%,#0862ff 100%)"></div>
<div class="a" style="left:418px;top:146px;width:214px;height:224px;background:linear-gradient(to bottom,rgba(0,0,0,0) 0%,rgba(0,0,0,0.2) 25%,rgba(0,0,0,0.47) 50%,rgba(0,0,0,0.72) 75%,rgba(0,0,0,0.88) 90%,#000 100%)"></div>
<svg class="a" style="left:622px;top:307px" width="10" height="13" viewBox="0 0 10 13"><circle cx="8" cy="6.5" r="5" fill="none" stroke="#fff" stroke-width="1.1"/></svg>
<div class="a" style="left:640px;top:144px;width:20px;height:228px;background:#fafafa"></div>
<div class="a" style="left:642px;top:146px;width:16px;height:224px;background:linear-gradient(to bottom,#ff0000 0%,#ff00ff 16.67%,#0000ff 33.33%,#00ffff 50%,#00ff00 66.67%,#ffff00 83.33%,#ff0000 100%)"></div>
<div class="a" style="left:635.5px;top:230px;width:6px;height:7.5px;border-radius:50%;background:#fff;border:1px solid #d8d8d8"></div>
<div class="a" style="left:659px;top:230px;width:6px;height:7.5px;border-radius:50%;background:#fff;border:1px solid #d8d8d8"></div>
<div class="t" style="left:683.66px;top:148.20px;font-size:10px;color:#333;transform:scaleX(0.983);transform-origin:0 0;">new</div>
<div class="a" style="left:668px;top:161px;width:50px;height:59.5px;background:#090c3a"></div>
<div class="t" style="left:677.60px;top:222.50px;font-size:10px;color:#333;transform:scaleX(1.011);transform-origin:0 0;">current</div>
<svg class="a" style="left:725.5px;top:162px" width="11" height="10" viewBox="0 0 11 10"><path d="M5.5 0.2L10.8 9.8H0.2Z" fill="#111"/><rect x="4.9" y="3" width="1.2" height="3.8" fill="#fff"/><rect x="4.9" y="7.6" width="1.2" height="1.2" fill="#fff"/></svg>
<div class="a" style="left:726.4px;top:176.4px;width:9.6px;height:9.6px;background:#090c3a;box-shadow:0 0 0 1px #d8d8d8"></div>
<svg class="a" style="left:726px;top:195px" width="10" height="10" viewBox="0 0 10 10"><circle cx="5" cy="5" r="4.2" fill="none" stroke="#333" stroke-width="1.2"/><path d="M5 5V9.5M5 5L1.5 3M5 5L8.5 3" stroke="#333" stroke-width="1.1"/></svg>
<div class="a" style="left:726.4px;top:208px;width:9.6px;height:9.8px;background:#090c3a;box-shadow:0 0 0 1px #d8d8d8"></div>
<div class="a" style="left:752px;top:129px;width:96px;height:20.5px;border:1px solid #9c9c9c;border-radius:11px;background:#f2f2f2"></div>
<div class="t" style="left:792.06px;top:133.80px;font-size:11px;color:#111;transform:scaleX(0.883);transform-origin:0 0;">OK</div>
<div class="a" style="left:752px;top:159.4px;width:96px;height:20.599999999999994px;border:1px solid #c4c4c4;border-radius:11px;background:#f2f2f2"></div>
<div class="t" style="left:785.13px;top:164.25px;font-size:11px;color:#111;transform:scaleX(0.862);transform-origin:0 0;">Cancel</div>
<div class="a" style="left:752px;top:196px;width:96px;height:21.69999999999999px;border:1px solid #c4c4c4;border-radius:11px;background:#f2f2f2"></div>
<div class="t" style="left:762.60px;top:201.40px;font-size:11px;color:#111;transform:scaleX(0.897);transform-origin:0 0;">Add to Swatches</div>
<div class="a" style="left:752px;top:233px;width:96px;height:20.69999999999999px;border:1px solid #c4c4c4;border-radius:11px;background:#f2f2f2"></div>
<div class="t" style="left:767.10px;top:237.90px;font-size:11px;color:#111;transform:scaleX(0.906);transform-origin:0 0;">Color Libraries</div>
<svg class="a" style="left:815px;top:154px" width="11" height="16" viewBox="0 0 11 16"><path d="M1 1V12.5L3.8 10L5.8 14.5L7.6 13.7L5.7 9.3H9.2Z" fill="#fff" stroke="#111" stroke-width="1"/></svg>
<div class="a" style="left:669.4px;top:272.6px;width:10.5px;height:10.5px;border-radius:50%;border:3px solid #2a2a2a;background:#fff"></div>
<div class="t" style="left:683.16px;top:272.48px;font-size:10.5px;color:#333;">H:</div>
<div class="a" style="left:704.5px;top:268.6px;width:31px;height:18.4px;background:#fff;border:1px solid #e2e2e2"></div>
<div class="t" style="left:708.42px;top:272.48px;font-size:10.5px;color:#1a1a1a;transform:scaleX(0.922);transform-origin:0 0;">220</div>
<div class="a" style="left:741.5px;top:274px;width:3.6px;height:3.6px;border-radius:50%;border:1px solid #555"></div>
<div class="a" style="left:669.4px;top:295.6px;width:10.5px;height:10.5px;border-radius:50%;border:1px solid #d4d4d4;background:#f4f4f4"></div>
<div class="t" style="left:683.53px;top:295.48px;font-size:10.5px;color:#333;">S:</div>
<div class="a" style="left:704.5px;top:291.6px;width:31px;height:18.4px;background:#fff;border:1px solid #e2e2e2"></div>
<div class="t" style="left:708.15px;top:295.48px;font-size:10.5px;color:#1a1a1a;transform:scaleX(0.949);transform-origin:0 0;">100</div>
<div class="t" style="left:740.12px;top:295.48px;font-size:10.5px;color:#333;transform:scaleX(1.034);transform-origin:0 0;">%</div>
<div class="a" style="left:669.4px;top:318.6px;width:10.5px;height:10.5px;border-radius:50%;border:1px solid #d4d4d4;background:#f4f4f4"></div>
<div class="t" style="left:683.16px;top:318.48px;font-size:10.5px;color:#333;">B:</div>
<div class="a" style="left:704.5px;top:314.6px;width:31px;height:18.4px;background:#fff;border:1px solid #5a78b8"></div>
<div class="t" style="left:708.46px;top:318.48px;font-size:10.5px;color:#1a1a1a;transform:scaleX(1.027);transform-origin:0 0;">25</div>
<div class="t" style="left:740.12px;top:318.48px;font-size:10.5px;color:#333;transform:scaleX(1.034);transform-origin:0 0;">%</div>
<div class="a" style="left:669.4px;top:346.1px;width:10.5px;height:10.5px;border-radius:50%;border:1px solid #d4d4d4;background:#f4f4f4"></div>
<div class="t" style="left:683.16px;top:345.98px;font-size:10.5px;color:#333;">R:</div>
<div class="a" style="left:704.5px;top:342.1px;width:31px;height:18.4px;background:#fff;border:1px solid #e2e2e2"></div>
<div class="t" style="left:708.58px;top:345.98px;font-size:10.5px;color:#1a1a1a;">0</div>
<div class="a" style="left:669.4px;top:369.5px;width:10.5px;height:10.5px;border-radius:50%;border:1px solid #d4d4d4;background:#f4f4f4"></div>
<div class="t" style="left:683.48px;top:369.38px;font-size:10.5px;color:#333;">G:</div>
<div class="a" style="left:704.5px;top:365.5px;width:31px;height:18.4px;background:#fff;border:1px solid #e2e2e2"></div>
<div class="t" style="left:708.48px;top:369.38px;font-size:10.5px;color:#1a1a1a;">21</div>
<div class="a" style="left:669.4px;top:392.6px;width:10.5px;height:10.5px;border-radius:50%;border:1px solid #d4d4d4;background:#f4f4f4"></div>
<div class="t" style="left:683.16px;top:392.48px;font-size:10.5px;color:#333;">B:</div>
<div class="a" style="left:704.5px;top:388.6px;width:31px;height:18.4px;background:#fff;border:1px solid #e2e2e2"></div>
<div class="t" style="left:708.48px;top:392.48px;font-size:10.5px;color:#1a1a1a;">64</div>
<div class="a" style="left:719.3px;top:317px;width:1.2px;height:13px;background:#111"></div>
<div class="a" style="left:766.7px;top:272.3px;width:10.5px;height:10.5px;border-radius:50%;border:1px solid #d4d4d4;background:#f4f4f4"></div>
<div class="t" style="left:779.76px;top:272.18px;font-size:10.5px;color:#333;">L:</div>
<div class="a" style="left:798.3px;top:268.3px;width:39px;height:18.4px;background:#fff;border:1px solid #e2e2e2"></div>
<div class="t" style="left:802.88px;top:272.18px;font-size:10.5px;color:#1a1a1a;">5</div>
<div class="a" style="left:766.7px;top:295.3px;width:10.5px;height:10.5px;border-radius:50%;border:1px solid #d4d4d4;background:#f4f4f4"></div>
<div class="t" style="left:780.18px;top:295.18px;font-size:10.5px;color:#333;">a:</div>
<div class="a" style="left:798.3px;top:291.3px;width:39px;height:18.4px;background:#fff;border:1px solid #e2e2e2"></div>
<div class="t" style="left:802.51px;top:295.18px;font-size:10.5px;color:#1a1a1a;">10</div>
<div class="a" style="left:766.7px;top:318.3px;width:10.5px;height:10.5px;border-radius:50%;border:1px solid #d4d4d4;background:#f4f4f4"></div>
<div class="t" style="left:779.92px;top:318.18px;font-size:10.5px;color:#333;">b:</div>
<div class="a" style="left:798.3px;top:314.3px;width:39px;height:18.4px;background:#fff;border:1px solid #e2e2e2"></div>
<div class="t" style="left:802.83px;top:318.18px;font-size:10.5px;color:#1a1a1a;">-34</div>
<div class="t" style="left:782.88px;top:346.48px;font-size:10.5px;color:#333;">C:</div>
<div class="a" style="left:798.3px;top:343.0px;width:31.2px;height:17.6px;background:#fff;border:1px solid #e2e2e2"></div>
<div class="t" style="left:802.21px;top:346.48px;font-size:10.5px;color:#1a1a1a;">100</div>
<div class="t" style="left:835.41px;top:346.48px;font-size:10.5px;color:#333;transform:scaleX(1.069);transform-origin:0 0;">%</div>
<div class="t" style="left:780.16px;top:369.38px;font-size:10.5px;color:#333;">M:</div>
<div class="a" style="left:798.3px;top:365.9px;width:31.2px;height:17.6px;background:#fff;border:1px solid #e2e2e2"></div>
<div class="t" style="left:802.53px;top:369.38px;font-size:10.5px;color:#1a1a1a;">92</div>
<div class="t" style="left:835.41px;top:369.38px;font-size:10.5px;color:#333;transform:scaleX(1.069);transform-origin:0 0;">%</div>
<div class="t" style="left:784.24px;top:392.48px;font-size:10.5px;color:#333;">Y:</div>
<div class="a" style="left:798.3px;top:389.0px;width:31.2px;height:17.6px;background:#fff;border:1px solid #e2e2e2"></div>
<div class="t" style="left:802.58px;top:392.48px;font-size:10.5px;color:#1a1a1a;">38</div>
<div class="t" style="left:835.41px;top:392.48px;font-size:10.5px;color:#333;transform:scaleX(1.069);transform-origin:0 0;">%</div>
<div class="t" style="left:784.16px;top:417.07px;font-size:10.5px;color:#333;">K:</div>
<div class="a" style="left:798.3px;top:413.6px;width:31.2px;height:17.6px;background:#fff;border:1px solid #e2e2e2"></div>
<div class="t" style="left:802.58px;top:417.07px;font-size:10.5px;color:#1a1a1a;">55</div>
<div class="t" style="left:835.41px;top:417.07px;font-size:10.5px;color:#333;transform:scaleX(1.069);transform-origin:0 0;">%</div>
<div class="t" style="left:671.64px;top:420.10px;font-size:10px;color:#333;transform:scaleX(1.156);transform-origin:0 0;">#</div>
<div class="a" style="left:683.4px;top:415.8px;width:74.3px;height:17.2px;background:#fff;border:1px solid #e2e2e2"></div>
<div class="t" style="left:687.60px;top:419.68px;font-size:10.5px;color:#1a1a1a;transform:scaleX(0.941);transform-origin:0 0;">001540</div>
<div class="a" style="left:419px;top:381px;width:10.5px;height:10.5px;background:#fff;border:1px solid #c0c0c0"></div>
<div class="t" style="left:434.04px;top:380.65px;font-size:11px;color:#1e1e1e;transform:scaleX(0.920);transform-origin:0 0;">Only Web Colors</div>
<div class="t" style="left:48.37px;top:674.85px;font-size:17px;color:#0a0a0a;font-weight:bold;-webkit-text-stroke:0.35px #0a0a0a">Amoozesh365.ir</div>
<div class="a" style="left:33px;top:699px;width:910px;height:15px;background:#efefef"></div>
<div class="a" style="left:33px;top:699px;width:40px;height:15px;background:#fbfbfb"></div>
<div class="a" style="left:73px;top:700px;width:155px;height:14px;background:#f2f2f2"></div>
<div class="t" style="left:42.35px;top:701.95px;font-size:9px;color:#333;transform:scaleX(0.961);transform-origin:0 0;">100%</div>
<div class="t" style="left:111.85px;top:702.85px;font-size:9px;color:#333;transform:scaleX(0.902);transform-origin:0 0;">Doc: 1.44M/1.93M</div>
<svg class="a" style="left:218.5px;top:704px" width="4" height="8" viewBox="0 0 4 8"><path d="M0.5 0.5L3.5 4L0.5 7.5" fill="none" stroke="#333" stroke-width="1"/></svg>
<div class="a" style="left:0;top:714px;width:1280px;height:6px;background:#050505"></div>
<div class="a" style="left:40px;top:714px;width:286px;height:6px;background:#f2f2f2"></div>
<div class="a" style="left:535px;top:715px;width:40px;height:5px;background:#3a3a3a"></div>
<div class="a" style="left:943px;top:54px;width:15px;height:660px;background:#e0e0e0"></div>
<div class="a" style="left:942px;top:80px;width:1px;height:620px;background:#747474"></div>
<div class="a" style="left:957px;top:54px;width:1px;height:660px;background:#a0a0a0"></div>
<div class="a" style="left:958px;top:54px;width:322px;height:660px;background:#efefef"></div>
<div class="a" style="left:958px;top:54px;width:322px;height:11px;background:#dfdfdf"></div>
<div class="a" style="left:958px;top:64px;width:322px;height:1.5px;background:#bcbcbc"></div>
<svg class="a" style="left:979px;top:57px" width="7" height="5" viewBox="0 0 7 5"><path d="M3.5 0L0 2.5L3.5 5ZM7 0L3.5 2.5L7 5Z" fill="#333"/></svg>
<svg class="a" style="left:1268px;top:57px" width="7" height="5" viewBox="0 0 7 5"><path d="M0 0L3.5 2.5L0 5ZM3.5 0L7 2.5L3.5 5Z" fill="#333"/></svg>
<div class="a" style="left:991px;top:65px;width:1px;height:649px;background:#acacac"></div>
<div class="a" style="left:960px;top:100px;width:30px;height:1px;background:#d4d4d4"></div>
<div class="a" style="left:960px;top:136px;width:30px;height:1px;background:#d4d4d4"></div>
<div class="a" style="left:968px;top:69px;width:14px;height:2px;border-top:1px dotted #aaa"></div>
<div class="a" style="left:968px;top:105px;width:14px;height:2px;border-top:1px dotted #aaa"></div>
<svg class="a" style="left:968px;top:77px" width="15" height="17" viewBox="0 0 15 17"><rect x="1" y="1.5" width="3.5" height="3" fill="none" stroke="#111" stroke-width="1"/><rect x="1" y="6.5" width="3.5" height="3" fill="none" stroke="#111" stroke-width="1"/><rect x="0.5" y="11.5" width="4.5" height="4.5" fill="#111"/><path d="M8.5 4.5H10C12.5 4.5 13.5 6.5 13.5 9C13.5 12 11.8 14.3 9 15.3" fill="none" stroke="#111" stroke-width="1.7"/><path d="M8 1.8L10.3 4.5L8 7.2" fill="none" stroke="#111" stroke-width="1.3"/></svg>
<svg class="a" style="left:968px;top:113px" width="15" height="17" viewBox="0 0 15 17"><circle cx="4.5" cy="5" r="3.8" fill="none" stroke="#111" stroke-width="1.4"/><path d="M4.5 2.5V9" stroke="#111" stroke-width="1.3"/><rect x="10" y="1" width="4" height="3.5" rx="1.2" fill="#111"/><rect x="10" y="6" width="4" height="3.5" rx="1.2" fill="#111"/><rect x="0.5" y="12" width="14" height="4" fill="#111"/></svg>
<div class="a" style="left:992px;top:65.5px;width:286px;height:25px;background:#dcdcdc"></div>
<div class="a" style="left:992px;top:65.5px;width:38.3px;height:25px;background:#f0f0f0"></div>
<div class="t" style="left:999.78px;top:72.52px;font-size:9.5px;color:#1e1e1e;transform:scaleX(0.885);transform-origin:0 0;-webkit-text-stroke:0.3px currentColor">Color</div>
<div class="t" style="left:1036.83px;top:72.52px;font-size:9.5px;color:#2a2a2a;transform:scaleX(0.873);transform-origin:0 0;-webkit-text-stroke:0.3px currentColor">Swatches</div>
<svg class="a" style="left:1265.5px;top:74.5px" width="9" height="6" viewBox="0 0 9 6"><path d="M0 0.5H9M0 2.2H9M0 3.9H9M0 5.6H9" stroke="#666" stroke-width="0.8"/></svg>
<div class="a" style="left:992px;top:90.5px;width:286px;height:123.5px;background:#f0f0f0"></div>
<div class="a" style="left:1278px;top:65px;width:2px;height:649px;background:#b8b8b8"></div>
<div class="a" style="left:1008px;top:106.5px;width:15.5px;height:17px;background:#fff;border:1px solid #3a3a3a"></div>
<div class="a" style="left:1000px;top:98px;width:16px;height:16px;background:#090c3a;border:1px solid #b0b0c0"></div>
<svg class="a" style="left:998.5px;top:143.5px" width="10" height="9.5" viewBox="0 0 10 9.5"><path d="M5 0.2L9.9 9.3H0.1Z" fill="#111"/><rect x="4.4" y="2.8" width="1.2" height="3.6" fill="#fff"/><rect x="4.4" y="7.2" width="1.2" height="1.2" fill="#fff"/></svg>
<div class="a" style="left:1011.5px;top:143px;width:11.5px;height:11.5px;background:#090c3a;border:1px solid #c0c0cc"></div>
<div class="a" style="left:1027px;top:93px;width:211px;height:118px;background:#fafafa"></div>
<div class="a" style="left:1029px;top:95px;width:207px;height:114px;background:linear-gradient(to right,#fff 0%,#d8e6ff 6%,#8ab8ff 20%,#4a94ff 45%,#2278ff 70%,#0862ff 100%)"></div>
<div class="a" style="left:1029px;top:95px;width:207px;height:114px;background:linear-gradient(to bottom,rgba(0,0,0,0) 0%,rgba(0,0,0,0.2) 25%,rgba(0,0,0,0.47) 50%,rgba(0,0,0,0.72) 75%,rgba(0,0,0,0.88) 90%,#000 100%)"></div>
<svg class="a" style="left:1229px;top:174px" width="9" height="12" viewBox="0 0 9 12"><circle cx="7" cy="6" r="4.6" fill="none" stroke="#ddd" stroke-width="1.1"/></svg>
<div class="a" style="left:1248px;top:93px;width:19px;height:118px;background:#fafafa"></div>
<div class="a" style="left:1250px;top:95px;width:15px;height:114px;background:linear-gradient(to bottom,#ff0000 0%,#ff00ff 16.67%,#0000ff 33.33%,#00ffff 50%,#00ff00 66.67%,#ffff00 83.33%,#ff0000 100%)"></div>
<div class="a" style="left:1243px;top:133px;width:6px;height:8px;border-radius:50%;background:#fff;border:1px solid #d0d0d0"></div>
<div class="a" style="left:992px;top:214px;width:286px;height:3.5px;background:#cacaca"></div>
<div class="a" style="left:992px;top:217.5px;width:286px;height:23.5px;background:#dcdcdc"></div>
<div class="a" style="left:992px;top:217.5px;width:40px;height:25px;background:#f0f0f0"></div>
<div class="t" style="left:999.66px;top:224.68px;font-size:9.5px;color:#1e1e1e;transform:scaleX(0.846);transform-origin:0 0;-webkit-text-stroke:0.3px currentColor">Layers</div>
<div class="t" style="left:1039.80px;top:224.68px;font-size:9.5px;color:#2a2a2a;transform:scaleX(0.852);transform-origin:0 0;-webkit-text-stroke:0.3px currentColor">Channels</div>
<div class="t" style="left:1091.37px;top:224.68px;font-size:9.5px;color:#2a2a2a;transform:scaleX(0.833);transform-origin:0 0;-webkit-text-stroke:0.3px currentColor">Paths</div>
<svg class="a" style="left:1265.5px;top:226px" width="9" height="6" viewBox="0 0 9 6"><path d="M0 0.5H9M0 2.2H9M0 3.9H9M0 5.6H9" stroke="#666" stroke-width="0.8"/></svg>
<div class="a" style="left:992px;top:241px;width:286px;height:78px;background:#f0f0f0"></div>
<div class="a" style="left:999.8px;top:249.3px;width:65px;height:14.7px;background:#f8f8f8"></div>
<svg class="a" style="left:1001px;top:251.5px" width="10" height="10" viewBox="0 0 10 10"><circle cx="6" cy="4" r="2.9" fill="none" stroke="#111" stroke-width="1.5"/><path d="M4 6L1 9" stroke="#111" stroke-width="1.8"/></svg>
<div class="t" style="left:1013.26px;top:251.32px;font-size:9.5px;color:#c8c8c8;transform:scaleX(0.840);transform-origin:0 0;">Kind</div>
<svg class="a" style="left:1058.5px;top:255.5px" width="6" height="4" viewBox="0 0 6 4"><path d="M0.5 0.5L3 3L5.5 0.5" fill="none" stroke="#d0d0d0" stroke-width="0.9"/></svg>
<svg class="a" style="left:1077px;top:252.5px" width="10" height="9" viewBox="0 0 10 9"><rect x="0.6" y="0.6" width="8.8" height="7.8" fill="none" stroke="#222" stroke-width="1.1"/><path d="M1.8 7.3L4.2 4.2L6 6L7.2 4.8L8.5 7.3Z" fill="#222"/></svg>
<svg class="a" style="left:1096.7px;top:251.8px" width="10" height="10" viewBox="0 0 10 10"><circle cx="5" cy="5" r="4.2" fill="none" stroke="#111" stroke-width="1.3"/><path d="M8 2A4.2 4.2 0 0 1 2 8Z" fill="#111"/></svg>
<svg class="a" style="left:1117.5px;top:252.5px" width="9.5" height="9" viewBox="0 0 9.5 9"><path d="M0.8 2.6V0.8H8.7V2.6M4.75 0.8V8.2M3 8.2H6.5" fill="none" stroke="#111" stroke-width="1.5"/></svg>
<svg class="a" style="left:1136.5px;top:252px" width="11" height="10.5" viewBox="0 0 11 10.5"><rect x="1.8" y="1.8" width="7.4" height="6.9" fill="none" stroke="#111" stroke-width="1.4"/><rect x="0" y="0" width="3.2" height="3.2" fill="#111"/><rect x="7.8" y="0" width="3.2" height="3.2" fill="#111"/><rect x="0" y="7.3" width="3.2" height="3.2" fill="#111"/><rect x="7.8" y="7.3" width="3.2" height="3.2" fill="#111"/></svg>
<svg class="a" style="left:1157.5px;top:252.5px" width="10" height="10" viewBox="0 0 10 10"><path d="M2 4.5V0.7H6.3L8.8 3.2V5" fill="none" stroke="#111" stroke-width="1.1"/><rect x="0.6" y="5" width="4.5" height="4.4" fill="none" stroke="#111" stroke-width="1.2"/><circle cx="7" cy="7.2" r="2.7" fill="#111"/></svg>
<div class="a" style="left:1177px;top:249.5px;width:7.3px;height:7px;border-radius:50%;background:#111"></div>
<div class="a" style="left:992px;top:268px;width:286px;height:1px;background:#d8d8d8"></div>
<div class="a" style="left:995px;top:274.3px;width:105px;height:14px;background:#f8f8f8"></div>
<div class="t" style="left:1001.53px;top:275.93px;font-size:9.5px;color:#c4c4c4;transform:scaleX(0.883);transform-origin:0 0;">Normal</div>
<svg class="a" style="left:1091px;top:280.5px" width="6" height="4" viewBox="0 0 6 4"><path d="M0.5 0.5L3 3L5.5 0.5" fill="none" stroke="#d0d0d0" stroke-width="0.9"/></svg>
<div class="t" style="left:1106.41px;top:275.50px;font-size:10px;color:#444;transform:scaleX(0.864);transform-origin:0 0;">Opacity:</div>
<div class="a" style="left:1142px;top:274.3px;width:29px;height:14px;background:#fafafa"></div>
<div class="t" style="left:1143.64px;top:275.93px;font-size:9.5px;color:#909090;transform:scaleX(0.922);transform-origin:0 0;">100%</div>
<div class="a" style="left:1171px;top:274.3px;width:13.2px;height:14px;background:#fafafa;border-left:1px solid #dadada"></div>
<svg class="a" style="left:1175px;top:280.5px" width="6" height="4" viewBox="0 0 6 4"><path d="M0.5 0.5L3 3L5.5 0.5" fill="none" stroke="#555" stroke-width="0.9"/></svg>
<div class="a" style="left:992px;top:292px;width:286px;height:1px;background:#d8d8d8"></div>
<div class="t" style="left:996.82px;top:300.10px;font-size:10px;color:#444;transform:scaleX(0.844);transform-origin:0 0;">Lock:</div>
<svg class="a" style="left:1024px;top:300.8px" width="10" height="10" viewBox="0 0 10 10"><rect x="0.6" y="0.6" width="8.8" height="8.8" fill="none" stroke="#111" stroke-width="1.2"/><rect x="2.2" y="2.2" width="2.5" height="2.5" fill="#111"/><rect x="5.3" y="5.3" width="2.5" height="2.5" fill="#111"/><rect x="5.3" y="2.2" width="2.5" height="2.5" fill="#777"/><rect x="2.2" y="5.3" width="2.5" height="2.5" fill="#777"/></svg>
<svg class="a" style="left:1043.5px;top:300.5px" width="11" height="12" viewBox="0 0 11 12"><path d="M10.3 0.8L4.8 7.2" stroke="#111" stroke-width="1.9"/><path d="M4.2 6.8C2 7.2 2.3 10 0.3 11.6C3 11.6 5.6 10.3 5.4 8Z" fill="#111"/></svg>
<svg class="a" style="left:1060.5px;top:301px" width="11" height="11" viewBox="0 0 11 11"><path d="M5.5 1V10M1 5.5H10" stroke="#111" stroke-width="1.3"/><path d="M5.5 0L3.6 2.2H7.4ZM5.5 11L3.6 8.8H7.4ZM0 5.5L2.2 3.6V7.4ZM11 5.5L8.8 3.6V7.4Z" fill="#111"/></svg>
<svg class="a" style="left:1078.5px;top:300px" width="11.5" height="12" viewBox="0 0 11.5 12"><path d="M2.8 0.5V9H11M0.3 2.8H8.5V11.5" fill="none" stroke="#111" stroke-width="1.3"/><path d="M7.5 0.6L10.5 0.6V3.6" fill="none" stroke="#444" stroke-width="0.9"/></svg>
<svg class="a" style="left:1098.2px;top:300px" width="9" height="11.5" viewBox="0 0 9 11.5"><path d="M2.3 5V3.5A2.2 2.2 0 0 1 6.7 3.5V5" fill="none" stroke="#111" stroke-width="1.5"/><rect x="0.5" y="5" width="8" height="6.3" fill="#111"/><rect x="4" y="7" width="1.1" height="2.4" fill="#fff"/></svg>
<div class="t" style="left:1124.88px;top:300.10px;font-size:10px;color:#444;transform:scaleX(0.899);transform-origin:0 0;">Fill:</div>
<div class="a" style="left:1142px;top:298.5px;width:29px;height:14px;background:#fafafa"></div>
<div class="t" style="left:1143.64px;top:300.53px;font-size:9.5px;color:#909090;transform:scaleX(0.922);transform-origin:0 0;">100%</div>
<div class="a" style="left:1171px;top:298.5px;width:13.2px;height:14px;background:#fafafa;border-left:1px solid #dadada"></div>
<svg class="a" style="left:1175px;top:304.5px" width="6" height="4" viewBox="0 0 6 4"><path d="M0.5 0.5L3 3L5.5 0.5" fill="none" stroke="#555" stroke-width="0.9"/></svg>
<div class="a" style="left:992px;top:317px;width:286px;height:378px;background:#e7e7e7"></div>
<div class="a" style="left:992px;top:317px;width:274px;height:173.5px;background:#f0f0f0"></div>
<div class="a" style="left:1017px;top:319.3px;width:249px;height:56.2px;background:#b1b1b1"></div>
<div class="a" style="left:992px;top:400.5px;width:274px;height:1px;background:#dcdcdc"></div>
<div class="a" style="left:1258.5px;top:403px;width:7px;height:55.5px;background:#dadada"></div>
<div class="a" style="left:1017px;top:445px;width:1px;height:36px;background:#dadada"></div>
<svg class="a" style="left:999.3px;top:344.2px" width="11" height="7" viewBox="0 0 11 7"><path d="M0.3 3.5C2 0.6 4 0 5.5 0C7 0 9 0.6 10.7 3.5C9 6.4 7 7 5.5 7C4 7 2 6.4 0.3 3.5Z" fill="#151515"/><circle cx="5.5" cy="3.3" r="1.5" fill="#777"/></svg>
<div class="a" style="left:1019.5px;top:338px;width:48px;height:19.5px;background:repeating-conic-gradient(#e4e4e4 0 25%,#f8f8f8 0 50%) 0 0/3px 3px"></div>
<svg class="a" style="left:1018px;top:336.5px" width="51.5" height="22.5" viewBox="0 0 51.5 22.5"><path d="M1 7V1H17M34.5 1H50.5V7M50.5 15.5V21.5H34.5M17 21.5H1V15.5" fill="none" stroke="#2a2a2a" stroke-width="2"/><path d="M1 7V15.5M17 1H34.5M50.5 7V15.5M34.5 21.5H17" fill="none" stroke="#888" stroke-width="1"/></svg>
<div class="t" style="left:1075.42px;top:342.60px;font-size:10px;color:#222;transform:scaleX(0.822);transform-origin:0 0;">clouds</div>
<svg class="a" style="left:999.3px;top:385.8px" width="11" height="7" viewBox="0 0 11 7"><path d="M0.3 3.5C2 0.6 4 0 5.5 0C7 0 9 0.6 10.7 3.5C9 6.4 7 7 5.5 7C4 7 2 6.4 0.3 3.5Z" fill="#151515"/><circle cx="5.5" cy="3.3" r="1.5" fill="#777"/></svg>
<svg class="a" style="left:1039px;top:384.3px" width="9.5" height="9.5" viewBox="0 0 9.5 9.5"><circle cx="4.75" cy="4.75" r="4" fill="none" stroke="#111" stroke-width="1.3"/><path d="M7.6 1.9A4 4 0 0 1 1.9 7.6Z" fill="#111"/></svg>
<svg class="a" style="left:1070px;top:382.4px" width="6.5" height="12" viewBox="0 0 6.5 12"><rect x="0.8" y="0.8" width="4.9" height="4.9" rx="2.4" fill="none" stroke="#222" stroke-width="1.2"/><rect x="0.8" y="6.3" width="4.9" height="4.9" rx="2.4" fill="none" stroke="#222" stroke-width="1.2"/></svg>
<div class="a" style="left:1079px;top:380px;width:47.5px;height:18px;background:#fff;border:1.3px solid #333;border-radius:1px"></div>
<div class="t" style="left:1133.12px;top:384.60px;font-size:10px;color:#222;transform:scaleX(0.850);transform-origin:0 0;">Hue/Saturation 1</div>
<svg class="a" style="left:999.3px;top:427.2px" width="11" height="7" viewBox="0 0 11 7"><path d="M0.3 3.5C2 0.6 4 0 5.5 0C7 0 9 0.6 10.7 3.5C9 6.4 7 7 5.5 7C4 7 2 6.4 0.3 3.5Z" fill="#151515"/><circle cx="5.5" cy="3.3" r="1.5" fill="#777"/></svg>
<div class="a" style="left:1020px;top:419px;width:46.5px;height:21.2px;background:#1a1a1a"></div>
<div class="a" style="left:1021.5px;top:420.5px;width:43.5px;height:18.2px;background:linear-gradient(180deg,#030310 0%,#071030 50%,#0d2a78 100%)"></div>
<div class="a" style="left:1057px;top:421px;width:8px;height:5px;background:#b84a66"></div>
<div class="a" style="left:1055px;top:429px;width:11px;height:11px;background:#fff;border:1px solid #222"></div>
<div class="a" style="left:1058.5px;top:432px;width:4.5px;height:5.5px;border:1.2px solid #222;border-radius:2px 2px 0 0"></div>
<div class="t" style="left:1075.55px;top:425.50px;font-size:10px;color:#222;transform:scaleX(0.847);transform-origin:0 0;">star maker</div>
<svg class="a" style="left:1245px;top:425px" width="11" height="10" viewBox="0 0 11 10"><circle cx="4" cy="6" r="3.5" fill="#f0f0f0" stroke="#777" stroke-width="1"/><circle cx="6.8" cy="4" r="3.5" fill="#f0f0f0" stroke="#222" stroke-width="1.2"/></svg>
<svg class="a" style="left:1259.5px;top:428px" width="7" height="4" viewBox="0 0 7 4"><path d="M0.5 3.5L3.5 0.8L6.5 3.5" fill="none" stroke="#666" stroke-width="0.9"/></svg>
<svg class="a" style="left:1034px;top:463px" width="11" height="7" viewBox="0 0 11 7"><path d="M0.3 3.5C2 0.6 4 0 5.5 0C7 0 9 0.6 10.7 3.5C9 6.4 7 7 5.5 7C4 7 2 6.4 0.3 3.5Z" fill="#151515"/><circle cx="5.5" cy="3.3" r="1.5" fill="#777"/></svg>
<div class="t" style="left:1055.62px;top:460.10px;font-size:10px;color:#222;transform:scaleX(0.834);transform-origin:0 0;">Smart Filters</div>
<svg class="a" style="left:1047.5px;top:480.3px" width="11" height="7" viewBox="0 0 11 7"><path d="M0.3 3.5C2 0.6 4 0 5.5 0C7 0 9 0.6 10.7 3.5C9 6.4 7 7 5.5 7C4 7 2 6.4 0.3 3.5Z" fill="#151515"/><circle cx="5.5" cy="3.3" r="1.5" fill="#777"/></svg>
<div class="t" style="left:1062.54px;top:477.90px;font-size:10px;color:#222;transform:scaleX(0.826);transform-origin:0 0;">Lens Flare</div>
<svg class="a" style="left:1246px;top:479.4px" width="11.5" height="8" viewBox="0 0 11.5 8"><path d="M0 2H11.5M0 5.8H11.5" stroke="#222" stroke-width="1.2"/><rect x="6.5" y="0" width="2.2" height="3.5" fill="#222"/><rect x="3" y="4" width="2.2" height="3.5" fill="#222"/></svg>
<div class="a" style="left:992px;top:693px;width:286px;height:21px;background:#f0f0f0"></div>
<svg class="a" style="left:1110px;top:700px" width="13" height="8" viewBox="0 0 13 8"><rect x="0.6" y="1" width="6" height="5.5" rx="2.7" fill="none" stroke="#aaa" stroke-width="1.2"/><rect x="6.4" y="1" width="6" height="5.5" rx="2.7" fill="none" stroke="#aaa" stroke-width="1.2"/></svg>
<div class="t" style="left:1133.87px;top:697.31px;font-size:12px;color:#333;font-style:italic;font-family:'Liberation Serif',serif;transform:scaleX(1.064);transform-origin:0 0;">fx</div>
<div class="a" style="left:1144px;top:709px;width:2px;height:2px;background:#111"></div>
<div class="a" style="left:1156px;top:699px;width:11px;height:9.5px;background:#111"></div>
<div class="a" style="left:1159px;top:701.2px;width:5px;height:5px;border-radius:50%;background:#fff"></div>
<svg class="a" style="left:1179px;top:698.5px" width="10" height="10" viewBox="0 0 10 10"><circle cx="5" cy="5" r="4.2" fill="none" stroke="#111" stroke-width="1.3"/><path d="M8 2A4.2 4.2 0 0 1 2 8Z" fill="#111"/></svg>
<div class="a" style="left:1189px;top:709px;width:2px;height:2px;background:#111"></div>
<svg class="a" style="left:1201px;top:699px" width="11" height="10" viewBox="0 0 11 10"><path d="M0.6 1H4L5 2.3H10.4V9.4H0.6Z" fill="#ddd" stroke="#777" stroke-width="1.1"/></svg>
<svg class="a" style="left:1224px;top:699px" width="10" height="10" viewBox="0 0 10 10"><path d="M0.8 0.8H9.2V9.2H4.5V5H0.8Z" fill="#fff" stroke="#111" stroke-width="1.5"/></svg>
<svg class="a" style="left:1247px;top:698px" width="9" height="11" viewBox="0 0 9 11"><path d="M0 2H9M3 2V0.6H6V2" fill="none" stroke="#222" stroke-width="1.1"/><rect x="1.2" y="3" width="6.6" height="7.4" fill="none" stroke="#222" stroke-width="1.2"/><path d="M3.5 4.5V9M5.5 4.5V9" stroke="#222" stroke-width="0.9"/></svg>
<svg class="a" style="left:1025px;top:618px" width="80" height="80" viewBox="0 0 720 720">
<path d="M75 355C68 250 130 170 260 150C400 130 520 118 600 55C645 150 655 260 612 352L565 275C500 300 430 312 392 330L386 372L352 336C250 342 150 348 75 355Z" fill="#fff" stroke="#fff" stroke-width="40" stroke-linejoin="round"/>
<path d="M75 355C68 250 130 170 260 150C400 130 520 118 600 55C645 150 655 260 612 352L565 275C500 300 430 312 392 330L386 372L352 336C250 342 150 348 75 355Z" fill="#0b0b0b"/>
<rect x="45" y="398" width="612" height="42" fill="#f3b000"/>
<path d="M45 398H338V520C338 570 310 600 260 600H120C70 600 45 570 45 520Z" fill="#f3b000"/>
<path d="M385 398H657V520C657 570 630 600 580 600H460C410 600 385 570 385 520Z" fill="#f3b000"/>
<path d="M85 440H300V515C300 545 285 562 255 562H125C98 562 85 545 85 515Z" fill="#f4f4fc"/>
<path d="M422 440H620V515C620 545 605 562 575 562H465C437 562 422 545 422 515Z" fill="#f4f4fc"/>
<path d="M150 505C160 455 225 450 240 495" fill="none" stroke="#111" stroke-width="34" stroke-linecap="round"/>
<path d="M460 480C480 440 540 450 545 505" fill="none" stroke="#111" stroke-width="34" stroke-linecap="round"/>
<path d="M285 590C320 625 375 620 395 580" fill="none" stroke="#111" stroke-width="26" stroke-linecap="round"/>
</svg>
<svg class="a" style="left:1100px;top:620px" width="180" height="48" viewBox="0 0 180 48">
<g fill="none" stroke="#f3b000" stroke-width="7" stroke-linejoin="round" stroke-linecap="round"><path d="M62 30C60 45 88 46 88 32"/><path d="M88 32H158"/><path d="M82 32V18M90 32V18M98 32V18"/><path d="M100.5 20V37"/><path d="M105.5 32V24C105.5 14.5 118 14.5 118 24V32"/><path d="M136 32V24C136 15.5 148 15.5 148 24V32"/><path d="M154 32V12.5"/><path d="M150 12.5H165"/></g>
<path d="M5 12.5H41V33.5H31V28.5H15V33.5H5Z" fill="#f3b000" stroke="#f3b000" stroke-width="2" stroke-linejoin="round"/>
<path d="M41 12.5H50C55 12.5 57 17 57 23V33.5H41Z" fill="#f3b000" stroke="#f3b000" stroke-width="2" stroke-linejoin="round"/>
<path d="M161 6.5L169.5 12.5L161 18.5Z" fill="#f3b000" stroke="#f3b000" stroke-width="2" stroke-linejoin="round"/>
<g fill="none" stroke="#fdf8ea" stroke-width="1.5" stroke-linejoin="round" stroke-linecap="round"><path d="M62 30C60 45 88 46 88 32"/><path d="M88 32H158"/><path d="M82 32V18M90 32V18M98 32V18"/><path d="M100.5 20V37"/><path d="M105.5 32V24C105.5 14.5 118 14.5 118 24V32"/><path d="M136 32V24C136 15.5 148 15.5 148 24V32"/><path d="M154 32V12.5"/><path d="M150 12.5H165"/>
<path d="M9.5 16.5V30M9.5 24H24M16.5 16.5V24M24 16.5V24M29.5 16.5V20.5C29.5 23.5 36.5 23.5 36.5 20.5V16.5M36.5 20.5V30"/>
<path d="M45.5 16.8H49.5C52 16.8 53 19 53 22V29.5H45.5Z"/>
<path d="M165 12.5H166.5"/>
</g>
<g fill="#f3b000"><path d="M85 16L88 9L91 16Z"/><circle cx="100.5" cy="14.5" r="2.4"/></g>
</svg>
<div class="t" style="left:1105.20px;top:666.95px;font-size:15px;color:#111;transform:scaleX(1.022);transform-origin:0 0;-webkit-text-stroke:0.5px #111">Amoozesh365.ir</div>
</body></html>
